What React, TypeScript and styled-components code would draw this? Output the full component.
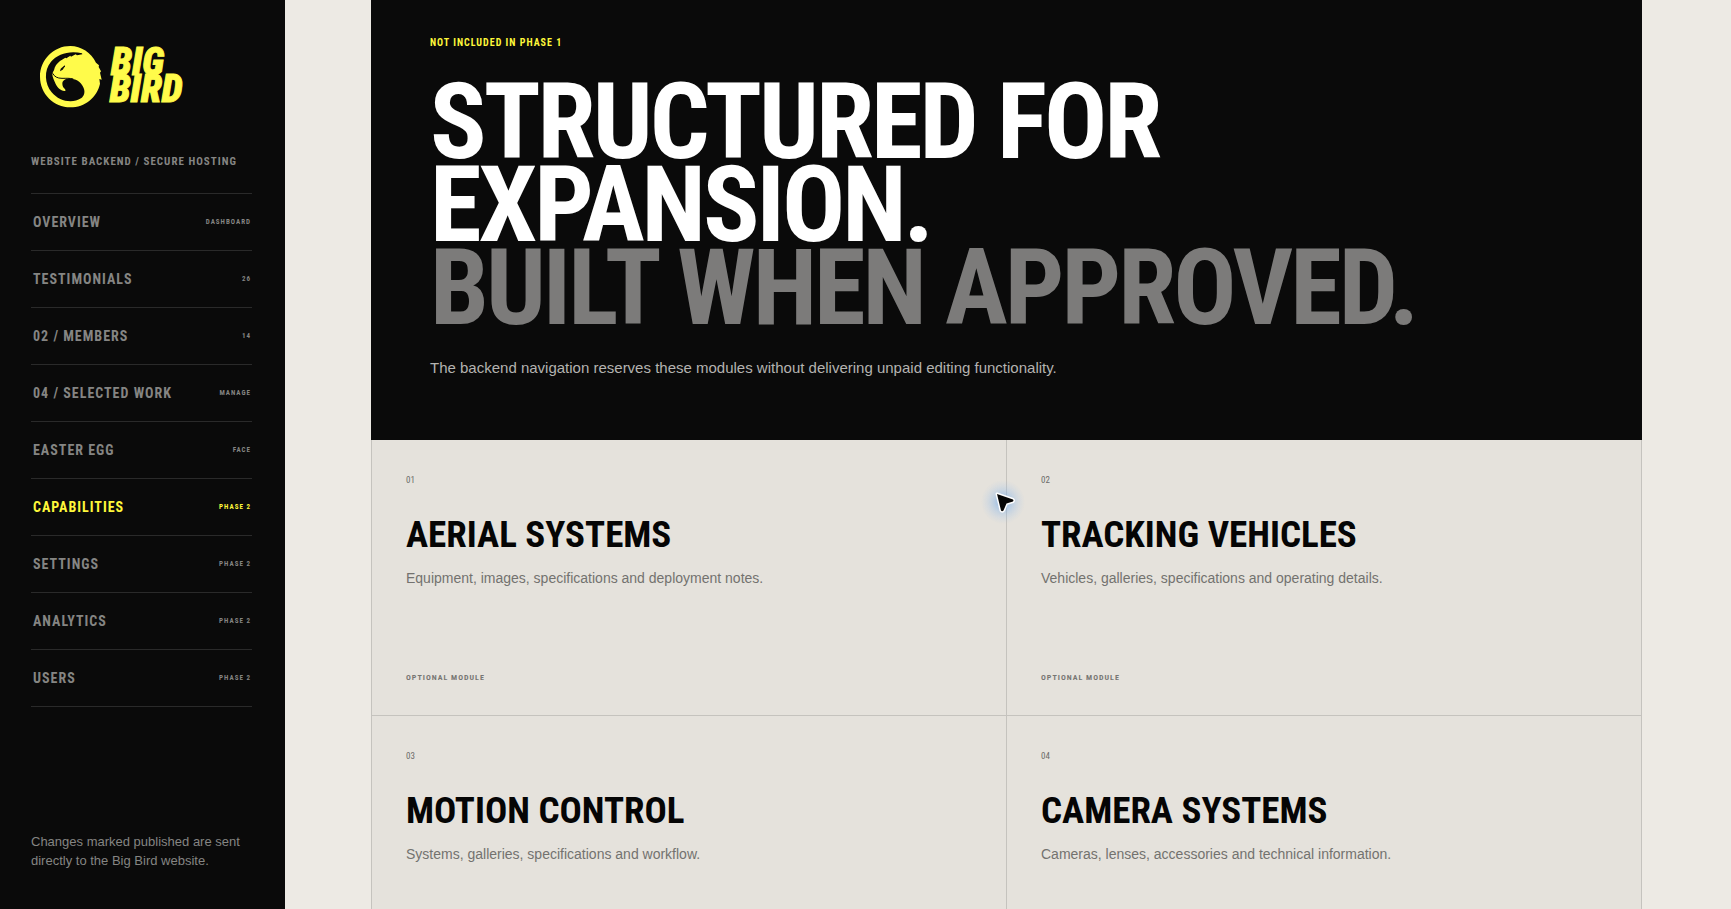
import React from "react";
import styled, { createGlobalStyle } from "styled-components";

const narrow = `"Roboto Condensed", "Liberation Sans Narrow", "Arial Narrow", "Liberation Sans", sans-serif`;
const sans = `"Liberation Sans", Arial, sans-serif`;

const GlobalStyle = createGlobalStyle`
  *, *::before, *::after { box-sizing: border-box; }
  body { margin: 0; background: #edeae4; font-family: ${sans}; }
  h1, h2, p { margin: 0; }
`;

const Shell = styled.div`
  display: flex;
  height: 100vh;
  overflow: hidden;
`;

const Sidebar = styled.aside`
  display: flex;
  flex-direction: column;
  flex: none;
  width: 285px;
  padding: 45px 33px 39px 31px;
  background: #0a0a0a;
`;

const Logo = styled.svg`
  display: block;
  width: 145px;
  height: 63px;
  margin: 0 0 47px 9px;
  overflow: visible;
`;

const Tagline = styled.p`
  margin-bottom: 24px;
  font: 700 11px/14px ${narrow};
  letter-spacing: 1px;
  white-space: nowrap;
  color: #858583;
`;

const Nav = styled.nav`
  display: flex;
  flex-direction: column;
  border-top: 1px solid #2a2a2a;
`;

const NavItem = styled.button<{ $active?: boolean }>`
  display: flex;
  align-items: center;
  justify-content: space-between;
  height: 57px;
  padding: 0 1px 0 2px;
  border: 0;
  border-bottom: 1px solid #2a2a2a;
  background: none;
  color: ${(p) => (p.$active ? "#fff83a" : "#858583")};
  font: 700 14px/20px ${narrow};
  letter-spacing: 1px;
  text-align: left;
  cursor: pointer;
`;

const NavTag = styled.span`
  font-size: 7px;
`;

const SidebarNote = styled.p`
  margin-top: auto;
  font-size: 13px;
  line-height: 19px;
  color: #858583;
`;

const Main = styled.main`
  flex: 1;
  min-width: 0;
  padding: 0 89px 0 86px;
  overflow-y: auto;
  scrollbar-width: none;
`;

const Hero = styled.section`
  padding: 37px 59px 60px;
  background: #0a0a0a;
`;

const Eyebrow = styled.p`
  margin-bottom: 32px;
  font: 700 10px/12px ${narrow};
  letter-spacing: 1px;
  color: #fff83a;
`;

const HeroTitle = styled.h1`
  max-width: 1100px;
  font: 700 105px/83px ${narrow};
  letter-spacing: -3px;
  color: #fff;
`;

const Muted = styled.span`
  display: block;
  color: #7c7b7a;
`;

const HeroText = styled.p`
  margin-top: 26px;
  font-size: 15px;
  line-height: 24px;
  color: #b4b3b0;
`;

const Grid = styled.section`
  display: grid;
  grid-template-columns: 1fr 1fr;
  border-left: 1px solid #c5c3be;
`;

const Card = styled.article`
  display: flex;
  flex-direction: column;
  min-height: 276px;
  padding: 34px 34px 32px;
  border-right: 1px solid #c5c3be;
  border-bottom: 1px solid #c5c3be;
  background: #e5e2dc;
`;

const CardNumber = styled.span`
  margin-bottom: 30px;
  font: 400 9px/12px ${narrow};
  color: #6c6b68;
`;

const CardTitle = styled.h2`
  font: 700 37px/38px ${narrow};
  color: #050505;
`;

const CardText = styled.p`
  margin-top: 14px;
  font-size: 14px;
  line-height: 20px;
  color: #73726f;
`;

const CardStatus = styled.span`
  margin-top: auto;
  font: 700 8px/10px ${narrow};
  letter-spacing: 1px;
  color: #777673;
`;

const Pointer = styled.svg`
  position: fixed;
  left: 975px;
  top: 471px;
  width: 60px;
  height: 60px;
  pointer-events: none;
`;

const navItems = [
  ["OVERVIEW", "DASHBOARD"],
  ["TESTIMONIALS", "26"],
  ["02 / MEMBERS", "14"],
  ["04 / SELECTED WORK", "MANAGE"],
  ["EASTER EGG", "FACE"],
  ["CAPABILITIES", "PHASE 2"],
  ["SETTINGS", "PHASE 2"],
  ["ANALYTICS", "PHASE 2"],
  ["USERS", "PHASE 2"],
];

const modules = [
  ["AERIAL SYSTEMS", "Equipment, images, specifications and deployment notes."],
  ["TRACKING VEHICLES", "Vehicles, galleries, specifications and operating details."],
  ["MOTION CONTROL", "Systems, galleries, specifications and workflow."],
  ["CAMERA SYSTEMS", "Cameras, lenses, accessories and technical information."],
];

function BrandLogo() {
  return (
    <Logo viewBox="60 45 435 189" role="img" aria-label="Big Bird">
      <path
        fill="#fffb4a"
        d="M151 48C101 48 60 89 60 140s41 92 91 92c44 0 80-30 89-71l-2-14 7 2-5-21 3-4-7-13 1-5-9-8C213 68 184 48 151 48Z"
      />
      <path
        fill="#0a0a0a"
        d="M186 70C150 60 112 72 93 95c-22 27-19 66 2 92 22 27 62 35 88 18 10-7 12-18 9-28-5-17-19-29-37-31-17-2-28 5-28 15 0 8 4 12 7 15 4 5 3 7-1 7-11-1-21-10-26-21-4-9-10-20-10-29 1-4 2-8 5-12 2-12 9-21 18-28l16-10 3 2 12-8 2 3 14-7 4 3 16-3Z"
      />
      <path fill="none" stroke="#0a0a0a" strokeWidth="3" d="M98 130c5 10 14 15 28 15 14 0 22-1 34 2" />
      <path fill="#0a0a0a" d="M120 124l2-8 12-10 1 3-7 10Z" />
      <g
        fill="#fffb4a"
        stroke="#fffb4a"
        strokeWidth="3"
        fontFamily="Roboto Condensed, Liberation Sans Narrow, sans-serif"
        fontSize="114"
        fontWeight="900"
        fontStyle="italic"
      >
        <text x="273" y="136">BIG</text>
        <text x="269" y="217">BIRD</text>
      </g>
    </Logo>
  );
}

export default function App() {
  return (
    <Shell>
      <GlobalStyle />
      <Sidebar>
        <BrandLogo />
        <Tagline>WEBSITE BACKEND / SECURE HOSTING</Tagline>
        <Nav>
          {navItems.map(([label, tag]) => (
            <NavItem key={label} type="button" $active={label === "CAPABILITIES"}>
              <span>{label}</span>
              <NavTag>{tag}</NavTag>
            </NavItem>
          ))}
        </Nav>
        <SidebarNote>Changes marked published are sent directly to the Big Bird website.</SidebarNote>
      </Sidebar>
      <Main>
        <Hero>
          <Eyebrow>NOT INCLUDED IN PHASE 1</Eyebrow>
          <HeroTitle>
            STRUCTURED FOR
            <br />
            EXPANSION.
            <Muted>BUILT WHEN APPROVED.</Muted>
          </HeroTitle>
          <HeroText>
            The backend navigation reserves these modules without delivering unpaid editing functionality.
          </HeroText>
        </Hero>
        <Grid>
          {modules.map(([title, text], i) => (
            <Card key={title}>
              <CardNumber>{`0${i + 1}`}</CardNumber>
              <CardTitle>{title}</CardTitle>
              <CardText>{text}</CardText>
              <CardStatus>OPTIONAL MODULE</CardStatus>
            </Card>
          ))}
        </Grid>
      </Main>
      <Pointer viewBox="0 0 60 60" aria-hidden="true">
        <defs>
          <radialGradient id="pointerGlow">
            <stop offset="0" stopColor="#5f9fe8" stopOpacity="0.7" />
            <stop offset="0.45" stopColor="#7fb2ec" stopOpacity="0.35" />
            <stop offset="1" stopColor="#a9c9ee" stopOpacity="0" />
          </radialGradient>
        </defs>
        <circle cx="28" cy="31" r="22" fill="url(#pointerGlow)" />
        <path
          d="M22 23L38 28.500Q39 29.500 38 30.500L31.500 32.500L28.500 39.500Q27 41 26 39.500Z"
          fill="#050505"
          stroke="#fff"
          strokeWidth="3"
          strokeLinejoin="round"
          paintOrder="stroke"
        />
      </Pointer>
    </Shell>
  );
}
